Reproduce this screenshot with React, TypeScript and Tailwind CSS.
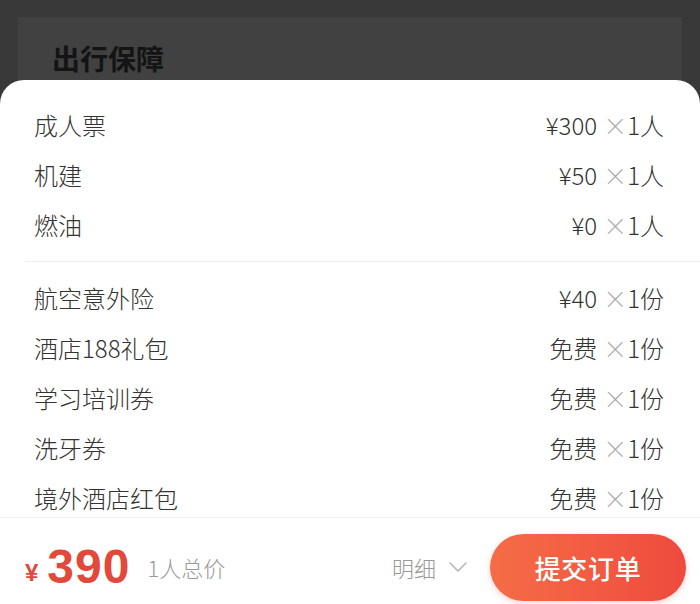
import React from 'react';

type Row = { name: string; price: string; qty: string };

const fareRows: Row[] = [
  { name: '成人票', price: '¥300', qty: '1人' },
  { name: '机建', price: '¥50', qty: '1人' },
  { name: '燃油', price: '¥0', qty: '1人' },
];

const extraRows: Row[] = [
  { name: '航空意外险', price: '¥40', qty: '1份' },
  { name: '酒店188礼包', price: '免费', qty: '1份' },
  { name: '学习培训券', price: '免费', qty: '1份' },
  { name: '洗牙券', price: '免费', qty: '1份' },
  { name: '境外酒店红包', price: '免费', qty: '1份' },
];

const font = { fontFamily: '"Noto Sans CJK SC", "Noto Sans", sans-serif' };

const PriceRow: React.FC<{ row: Row }> = ({ row }) => (
  <div className="h-[50px] flex items-center justify-between pl-[34px] pr-[36px] text-[24px] font-light text-[#333]">
    <span>{row.name}</span>
    <span className="flex items-center">
      <span>{row.price}</span>
      <span className="ml-[6px] text-[#aaa] font-light">×</span>
      <span>{row.qty}</span>
    </span>
  </div>
);

export default function App() {
  return (
    <div className="h-[604px] w-[700px] bg-[#393939] flex flex-col overflow-hidden" style={font}>
      {/* dimmed page behind the sheet */}
      <div className="h-[80px] pt-[17px] px-[18px] shrink-0">
        <div className="h-full bg-[#414141] pl-[34px] pt-[27px]">
          <h1 className="text-[28px] font-bold text-[#141414] leading-none">出行保障</h1>
        </div>
      </div>

      {/* price detail sheet */}
      <div className="flex-1 bg-white rounded-t-[24px] flex flex-col overflow-hidden">
        <div className="flex-1 overflow-hidden pt-[20px]">
          {fareRows.map((r) => (
            <PriceRow key={r.name} row={r} />
          ))}
          <div className="ml-[25px] mt-[11px] mb-[11px] h-px bg-[#ececec]" />
          {extraRows.map((r) => (
            <PriceRow key={r.name} row={r} />
          ))}
        </div>

        {/* bottom bar */}
        <div className="h-[87px] shrink-0 border-t border-[#eeeeee] flex items-center pt-[12px] pl-[25px] pr-[14px]">
          <span className="text-[24px] font-bold text-[#e2493b] mt-[12px]" style={{ fontFamily: '"Liberation Sans", sans-serif' }}>¥</span>
          <span className="ml-[9px] text-[48px] font-bold text-[#e2493b] leading-none tracking-[1px]" style={{ fontFamily: '"Liberation Sans", sans-serif' }}>390</span>
          <span className="ml-[17px] text-[22px] font-light text-[#999]">1人总价</span>
          <div className="ml-auto flex items-center mr-[22px]">
            <span className="text-[22px] font-light text-[#999]">明细</span>
            <svg className="ml-[12px]" width="20" height="12" viewBox="0 0 20 12" fill="none">
              <path d="M2 2 L10 10 L18 2" stroke="#b5b5b5" strokeWidth="1.6" strokeLinecap="round" strokeLinejoin="round" />
            </svg>
          </div>
          <button className="h-[67px] w-[196px] rounded-full bg-gradient-to-r from-[#f56c46] to-[#ee4a3e] text-white text-[26px] font-medium tracking-wide shadow-[0_2px_6px_rgba(238,74,62,0.25)]">
            提交订单
          </button>
        </div>
      </div>
    </div>
  );
}
